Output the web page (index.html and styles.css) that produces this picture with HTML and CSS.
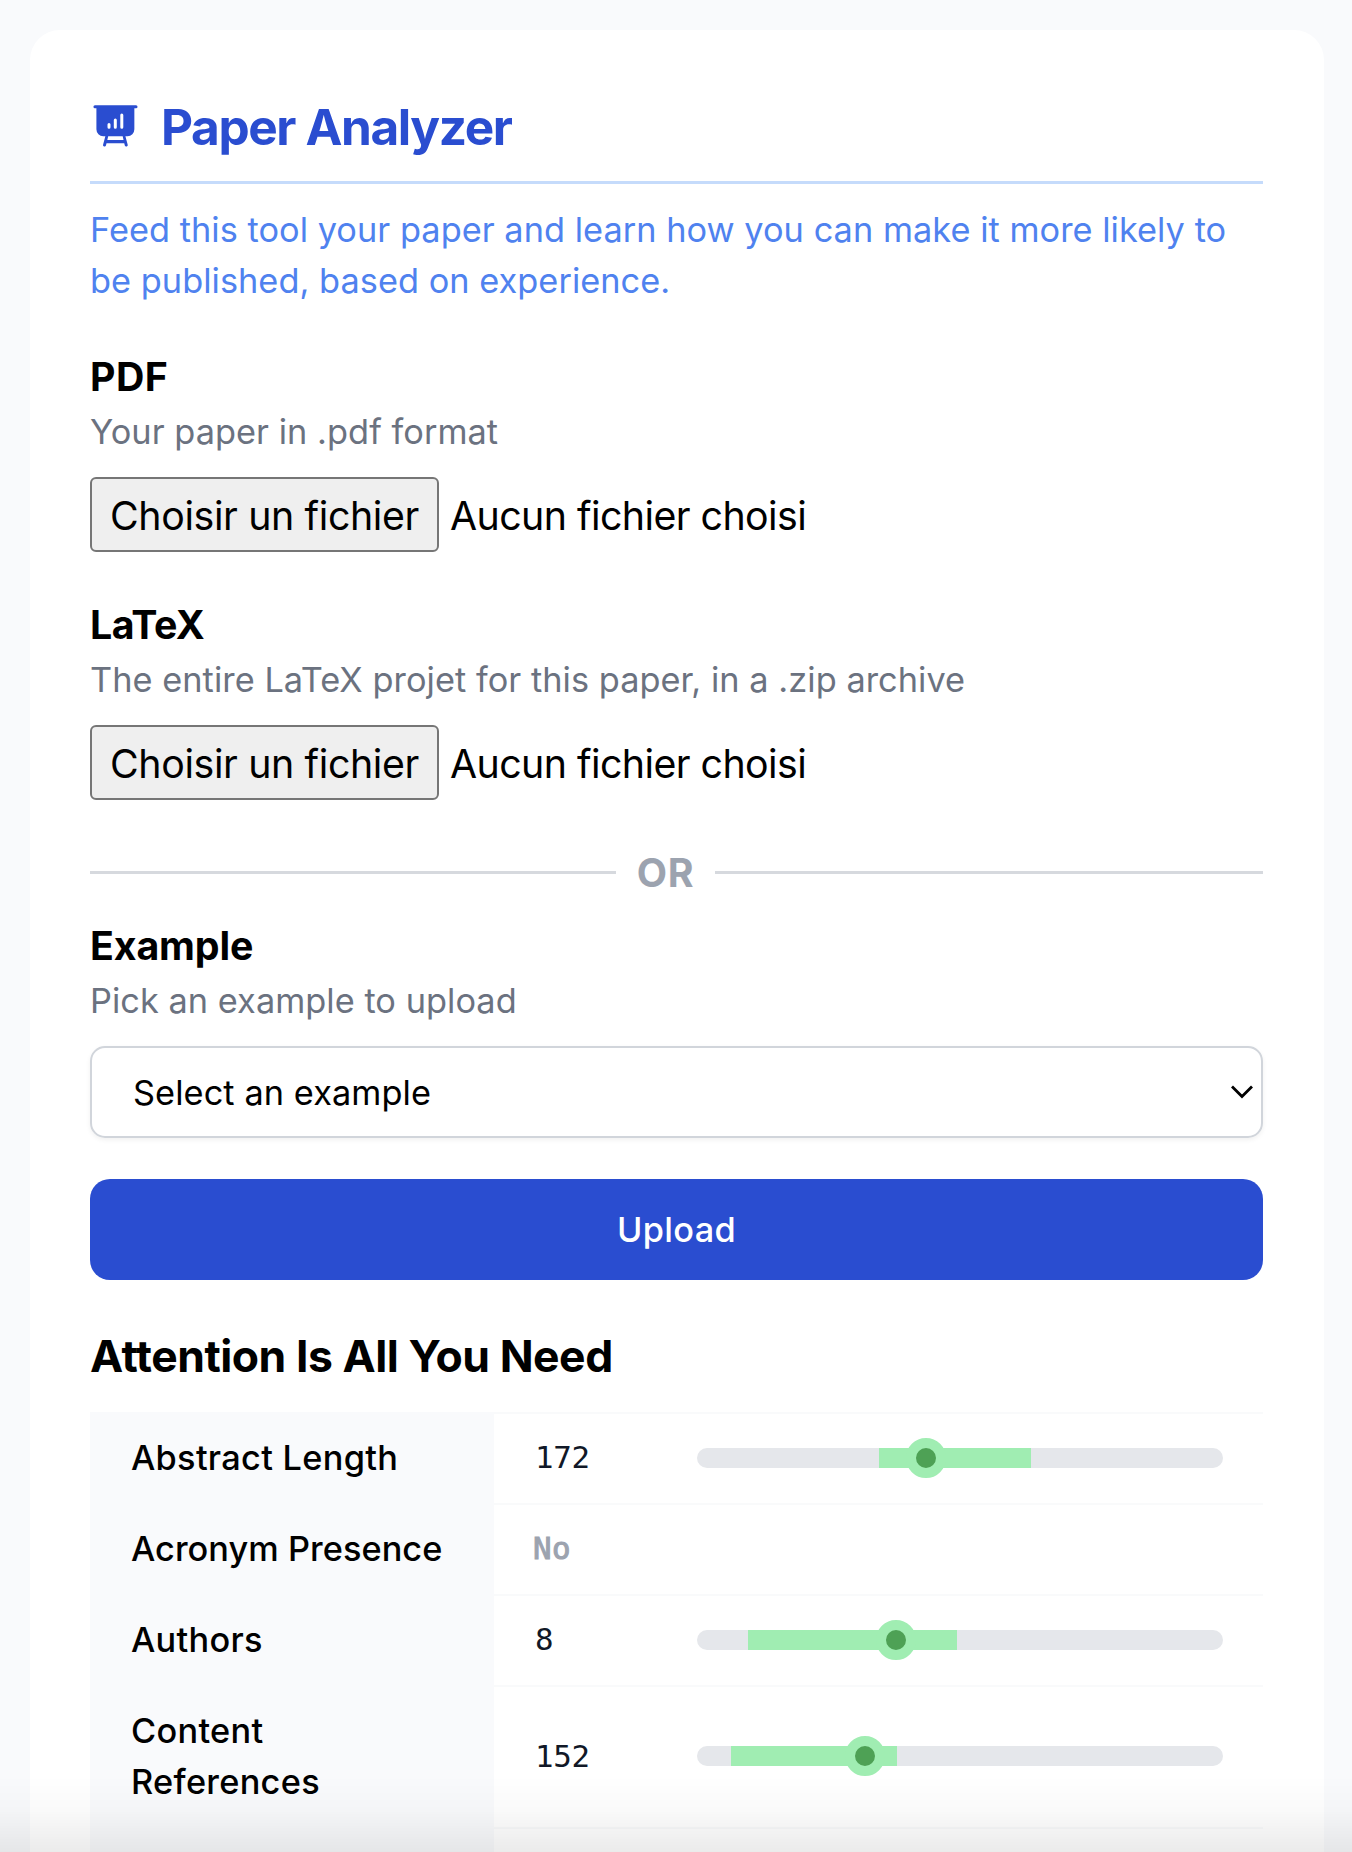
FILE: index.html
```html
<!DOCTYPE html>
<html lang="en">
<head>
<meta charset="utf-8">
<title>Paper Analyzer</title>
<link rel="stylesheet" href="styles.css">
</head>
<body>
<main class="card">
  <header class="header">
    <svg class="logo" viewBox="0 0 46 42" aria-hidden="true">
      <path transform="translate(1.1 0) scale(.973 1)" d="M1.9 .2H44.1A1.5 1.5 0 0 1 44.1 3.3H42.4V24.3A7 7 0 0 1 35.4 31.3H33.2L35.5 39.4A1.5 1.5 0 0 1 32.6 40.5L32 38.2H13.8L13.2 40.5A1.5 1.5 0 0 1 10.3 39.4L12.6 31.3H10.4A7 7 0 0 1 3.4 24.3V3.3H1.9A1.5 1.5 0 0 1 1.9 .2ZM15.5 31.3L14.6 35.1H31.3L30.4 31.3Z" fill="currentColor" fill-rule="evenodd"/>
      <path d="M17 19.6V22.3M23.3 15V22.3M29.8 10.1V22.3" stroke="#fff" stroke-width="3" stroke-linecap="round"/>
    </svg>
    <h1 class="title">Paper Analyzer</h1>
  </header>
  <p class="intro">Feed this tool your paper and learn how you can make it more likely to be published, based on experience.</p>

  <section class="field">
    <h2 class="label label-pdf">PDF</h2>
    <p class="hint">Your paper in .pdf format</p>
    <div class="file"><button class="file-button" type="button">Choisir un fichier</button><span class="file-name">Aucun fichier choisi</span></div>
  </section>
  <section class="field">
    <h2 class="label label-latex">LaTeX</h2>
    <p class="hint">The entire LaTeX projet for this paper, in a .zip archive</p>
    <div class="file"><button class="file-button" type="button">Choisir un fichier</button><span class="file-name">Aucun fichier choisi</span></div>
  </section>

  <div class="divider"><span class="divider-text">OR</span></div>

  <section class="example">
    <h2 class="label">Example</h2>
    <p class="hint">Pick an example to upload</p>
    <div class="select">
      <span>Select an example</span>
      <svg class="chevron" viewBox="0 0 24 14" aria-hidden="true"><path d="M2 1.5L12 11.5L22 1.5" fill="none" stroke="#000" stroke-width="2.8"/></svg>
    </div>
  </section>
  <button class="upload" type="button">Upload</button>

  <h2 class="paper">Attention Is All You Need</h2>
  <div class="metrics">
    <div class="row">
      <div class="name">Abstract Length</div>
      <div class="data"><span class="value">172</span>
        <div class="track"><i class="range" style="left:34.6%;width:28.9%"></i><i class="dot" style="left:43.45%"></i></div></div>
    </div>
    <div class="row">
      <div class="name acronym">Acronym Presence</div>
      <div class="data"><span class="value none">No</span></div>
    </div>
    <div class="row">
      <div class="name">Authors</div>
      <div class="data"><span class="value">8</span>
        <div class="track"><i class="range" style="left:9.7%;width:39.8%"></i><i class="dot" style="left:37.75%"></i></div></div>
    </div>
    <div class="row">
      <div class="name">Content References</div>
      <div class="data"><span class="value">152</span>
        <div class="track"><i class="range" style="left:6.5%;width:31.5%"></i><i class="dot" style="left:31.9%"></i></div></div>
    </div>
    <div class="row last">
      <div class="name"></div>
      <div class="data"></div>
    </div>
  </div>
</main>
<div class="shade"></div>
</body>
</html>
```
FILE: styles.css
```css
* { box-sizing: border-box; }

body {
  margin: 0;
  height: 1852px;
  overflow: hidden;
  padding: 30px 28px 0 30px;
  background: #f9fafc;
  color: #000;
  font: 400 34.3px/51px Inter, "Liberation Sans", sans-serif;
}

h1, h2, p { margin: 0; }

.card {
  height: 1822px;
  padding: 67px 61px 0 60px;
  border-radius: 30px 30px 0 0;
  background: #fff;
}

.header {
  display: flex;
  gap: 22px;
  height: 87px;
  padding-left: 2px;
  border-bottom: 3px solid #c5dbfb;
  color: #2a4dd0;
}

.logo { width: 46px; height: 42px; margin-top: 8px; }

.title {
  padding-left: 1px;
  font-size: 49.5px;
  font-weight: 700;
  line-height: 60px;
  letter-spacing: -1.39px;
}

.intro {
  padding-top: 20px;
  color: #4f82ef;
  letter-spacing: .045px;
}

.field { height: 248px; }
.field:first-of-type { margin-top: 41px; }

.label {
  height: 59px;
  font-size: 39.3px;
  font-weight: 650;
  line-height: 60px;
  letter-spacing: -.1px;
}
.label-pdf { letter-spacing: .5px; }
.label-latex { letter-spacing: -.5px; }

.hint {
  color: #6b7280;
  letter-spacing: .05px;
}

.file {
  display: flex;
  align-items: center;
  height: 75px;
  margin-top: 20px;
  font-size: 39.3px;
}

.file-button {
  width: 349px;
  height: 75px;
  padding: 2px 0 0;
  border: 2px solid #767676;
  border-radius: 6px;
  background: #efefef;
  color: #000;
  font: inherit;
  letter-spacing: -.37px;
  text-align: center;
}

.file-name {
  padding: 2px 0 0 11px;
  letter-spacing: -.56px;
}

.divider {
  display: grid;
  grid-template-columns: 526px 99px 1fr;
  align-items: center;
  height: 60px;
  margin-top: -1px;
  color: #9ca3af;
  font-size: 39.3px;
  font-weight: 700;
  text-align: center;
}
.divider::before, .divider::after { content: ""; height: 3px; background: #d6d9de; }
.divider-text { letter-spacing: .8px; }

.example { margin-top: 14px; }

.select {
  display: flex;
  align-items: center;
  justify-content: space-between;
  height: 92px;
  margin-top: 20px;
  padding: 0 7px 0 41px;
  border: 2px solid #d1d5db;
  border-radius: 15px;
  box-shadow: 0 2px 5px rgba(0, 0, 0, .06);
  letter-spacing: .09px;
}

.chevron { width: 24px; height: 14px; }

.upload {
  display: block;
  width: 100%;
  height: 101px;
  margin-top: 41px;
  padding: 0;
  border: 0;
  border-radius: 20px;
  background: #2a4dd0;
  color: #fff;
  font: inherit;
  font-weight: 550;
  letter-spacing: .35px;
}

.paper {
  margin: 41px 0 20px;
  font-size: 44.5px;
  font-weight: 650;
  line-height: 71px;
  letter-spacing: -.48px;
}

.row {
  display: grid;
  grid-template-columns: 404px 1fr;
  min-height: 91px;
}

.name {
  padding: 20px 41px 20px 41px;
  background: #f9fafc;
  font-weight: 530;
  letter-spacing: .3px;
}
.acronym { letter-spacing: .05px; padding-right: 0; }

.data {
  display: grid;
  grid-template-columns: 163px 1fr;
  align-items: center;
  padding: 0 40px 2px;
  border-top: 2px solid #f9fafb;
}

.last { min-height: 27px; height: 27px; overflow: hidden; }

.value {
  padding-left: 1px;
  color: #111827;
  font: 30.8px/51px "DejaVu Sans Mono", monospace;
  letter-spacing: -.3px;
}
.none {
  padding-left: 0;
  color: #9ca3af;
  letter-spacing: .4px;
  text-indent: -1px;
  -webkit-text-stroke: 1px #9ca3af;
}

.track {
  position: relative;
  height: 20px;
  border-radius: 10px;
  background: #e5e7eb;
}

.range {
  position: absolute;
  top: 0;
  height: 20px;
  background: #a0edb2;
}

.dot {
  position: absolute;
  top: -10px;
  width: 40px;
  height: 40px;
  margin-left: -20px;
  border: 10px solid #a0edb2;
  border-radius: 50%;
  background: #4ea155;
}

/* Fade at the lower edge of the viewport */
.shade {
  position: fixed;
  inset: auto 0 0;
  height: 76px;
  background: linear-gradient(rgba(0, 0, 0, 0), rgba(0, 0, 0, .02) 45%, rgba(0, 0, 0, .08));
}
```
